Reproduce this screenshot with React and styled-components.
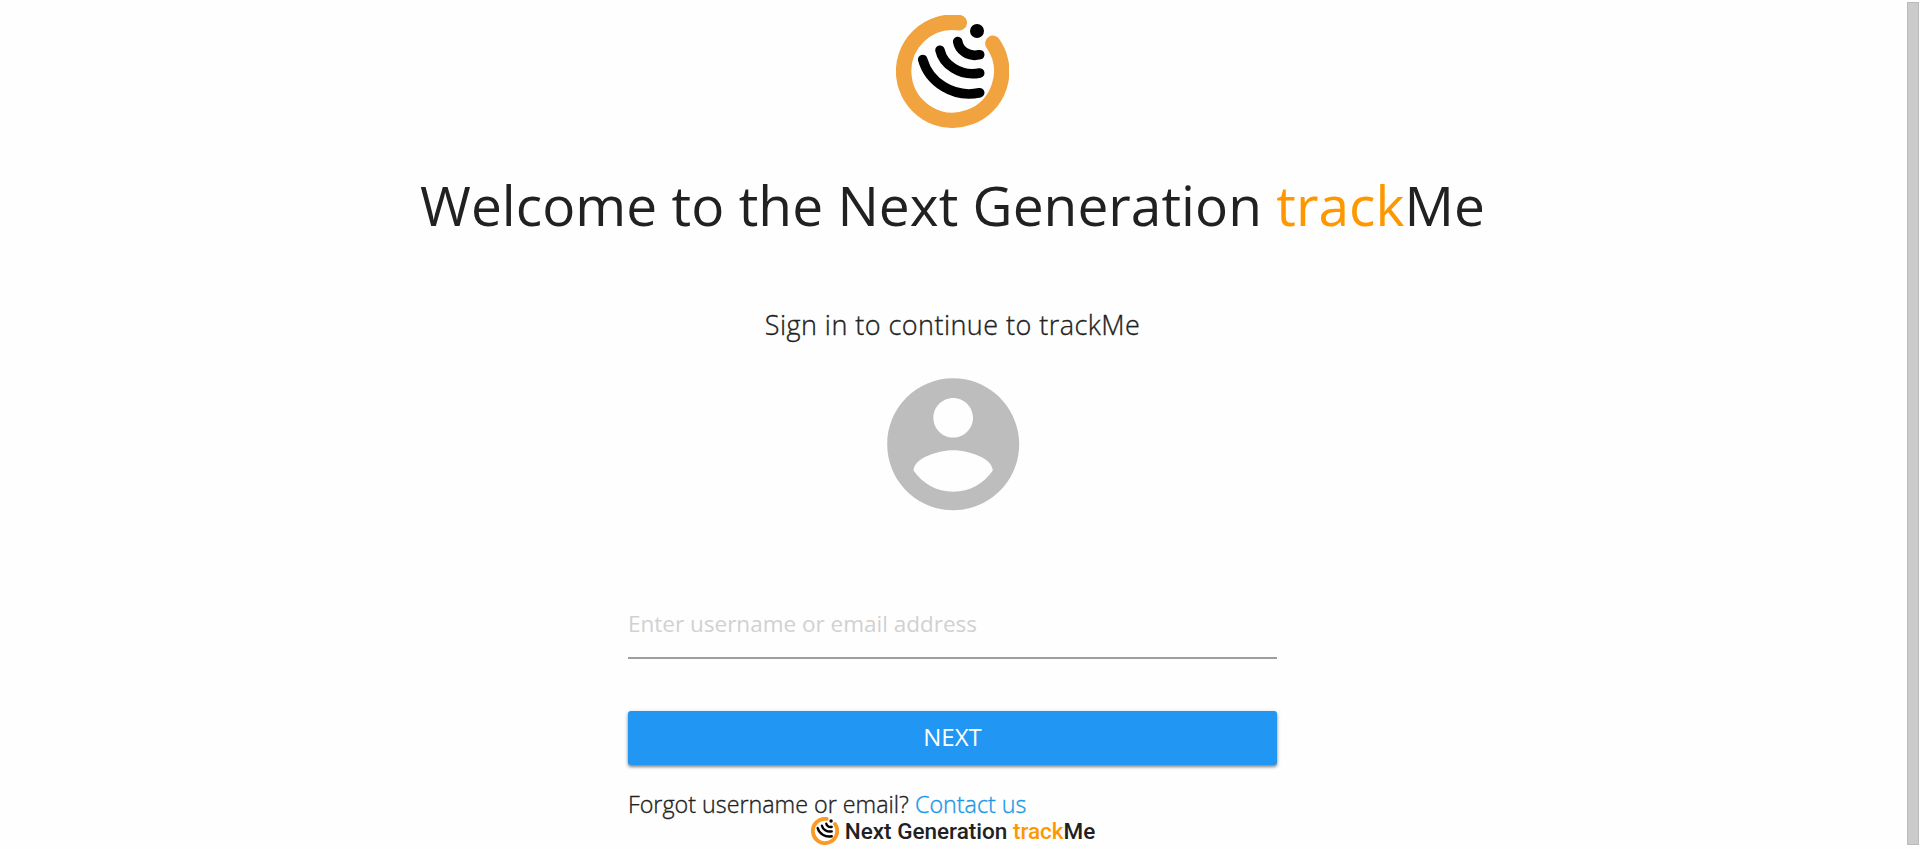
import React from "react";
import styled, { createGlobalStyle } from "styled-components";

const GlobalStyle = createGlobalStyle`
  *, *::before, *::after { box-sizing: border-box; }
  html, body { margin: 0; height: 100%; overflow: hidden; background: #fefefe; }
  body { font-family: "Open Sans", sans-serif; color: #212121; }
`;

const Page = styled.div`
  display: flex;
  height: 849px;
`;

const Content = styled.main`
  flex: 1;
  display: flex;
  flex-direction: column;
  align-items: center;
  padding: 15px 2px 0 0;
`;

const ScrollTrack = styled.div`
  flex: none;
  width: 13px;
  padding: 2px 1px 4px 0;
`;

const ScrollThumb = styled.div`
  height: 843px;
  background: #cbcbcb;
  border: 1px solid #bababa;
`;

const LogoSvg = styled.svg`
  display: block;
  flex: none;
  width: ${(p) => p.$size}px;
  height: ${(p) => p.$size}px;
`;

const Title = styled.h1`
  margin: 39px 0 0;
  height: 76px;
  line-height: 76px;
  font-size: 55px;
  font-weight: 400;
  letter-spacing: 0.05px;
  white-space: nowrap;
`;

const Accent = styled.span`
  color: #ff9800;
`;

const Subtitle = styled.h2`
  margin: 64px 0 0;
  height: 36px;
  line-height: 36px;
  font-size: 27px;
  font-weight: 300;
  letter-spacing: 0.45px;
  -webkit-text-stroke: 0.35px currentColor;
  white-space: nowrap;
`;

const Avatar = styled.svg`
  display: block;
  flex: none;
  width: 158.4px;
  height: 158.4px;
  margin: 22px 0 0 1px;
  fill: #bdbdbd;
`;

const Form = styled.form`
  width: 649px;
  margin-top: 64.6px;
  display: flex;
  flex-direction: column;
`;

const Input = styled.input`
  height: 71px;
  padding: 2px 0 0;
  border: 0;
  border-bottom: 2px solid #9e9e9e;
  border-radius: 0;
  outline: 0;
  background: transparent;
  font: 400 22.5px "Open Sans", sans-serif;
  &::placeholder { color: #d1d1d1; opacity: 1; }
`;

const NextButton = styled.button`
  height: 54px;
  margin-top: 52px;
  padding: 0 0 2px;
  border: 0;
  border-radius: 3px;
  background: #2196f3;
  color: #fff;
  font: 400 24px/52px "Open Sans", sans-serif;
  box-shadow: 0 2px 3px rgba(0, 0, 0, 0.4), 0 1px 5px rgba(0, 0, 0, 0.16);
`;

const Help = styled.p`
  margin: 22px 0 0;
  height: 34px;
  line-height: 34px;
  font-size: 23.3px;
  font-weight: 300;
  -webkit-text-stroke: 0.35px currentColor;
  white-space: nowrap;
`;

const Link = styled.a`
  color: #1a98e8;
  text-decoration: none;
`;

const Footer = styled.footer`
  display: flex;
  align-items: center;
  gap: 6px;
  margin-top: -4px;
  padding-left: 1px;
  height: 28px;
  font: 500 22.5px/28px Roboto, sans-serif;
  white-space: nowrap;
`;

function Logo({ size, color }) {
  return (
    <LogoSvg $size={size} viewBox="0 0 113 113" fill="none" strokeLinecap="round">
      <path d="M63.3 7.7A49 49 0 1 0 96.9 28.3" stroke={color} strokeWidth="15.5" />
      <circle cx="81" cy="16" r="7" fill="#000" />
      <g stroke="#000" strokeWidth="9.6">
        <path d="M61.7 26.6C63 35 72 42.5 83.7 39.7" />
        <path d="M44 35.2C47 49 64 62 83.7 58" />
        <path d="M26.7 44.5C33 67 57 83.5 83.7 77.7" />
      </g>
    </LogoSvg>
  );
}

export default function App() {
  return (
    <>
      <GlobalStyle />
      <Page>
        <Content>
          <Logo size={113} color="#f1a340" />
          <Title>Welcome to the Next Generation <Accent>track</Accent>Me</Title>
          <Subtitle>Sign in to continue to trackMe</Subtitle>
          <Avatar viewBox="0 0 24 24">
            <path d="M12 2C6.48 2 2 6.48 2 12s4.48 10 10 10 10-4.48 10-10S17.52 2 12 2zm0 3c1.66 0 3 1.34 3 3s-1.34 3-3 3-3-1.34-3-3 1.34-3 3-3zm0 14.2c-2.5 0-4.71-1.28-6-3.22.03-1.99 4-3.08 6-3.08 1.99 0 5.97 1.09 6 3.08-1.29 1.94-3.5 3.22-6 3.22z" />
          </Avatar>
          <Form>
            <Input placeholder="Enter username or email address" />
            <NextButton type="button">NEXT</NextButton>
            <Help>Forgot username or email? <Link>Contact us</Link></Help>
          </Form>
          <Footer>
            <Logo size={28} color="#fb9a25" />
            <span>Next Generation <Accent>track</Accent>Me</span>
          </Footer>
        </Content>
        <ScrollTrack><ScrollThumb /></ScrollTrack>
      </Page>
    </>
  );
}
